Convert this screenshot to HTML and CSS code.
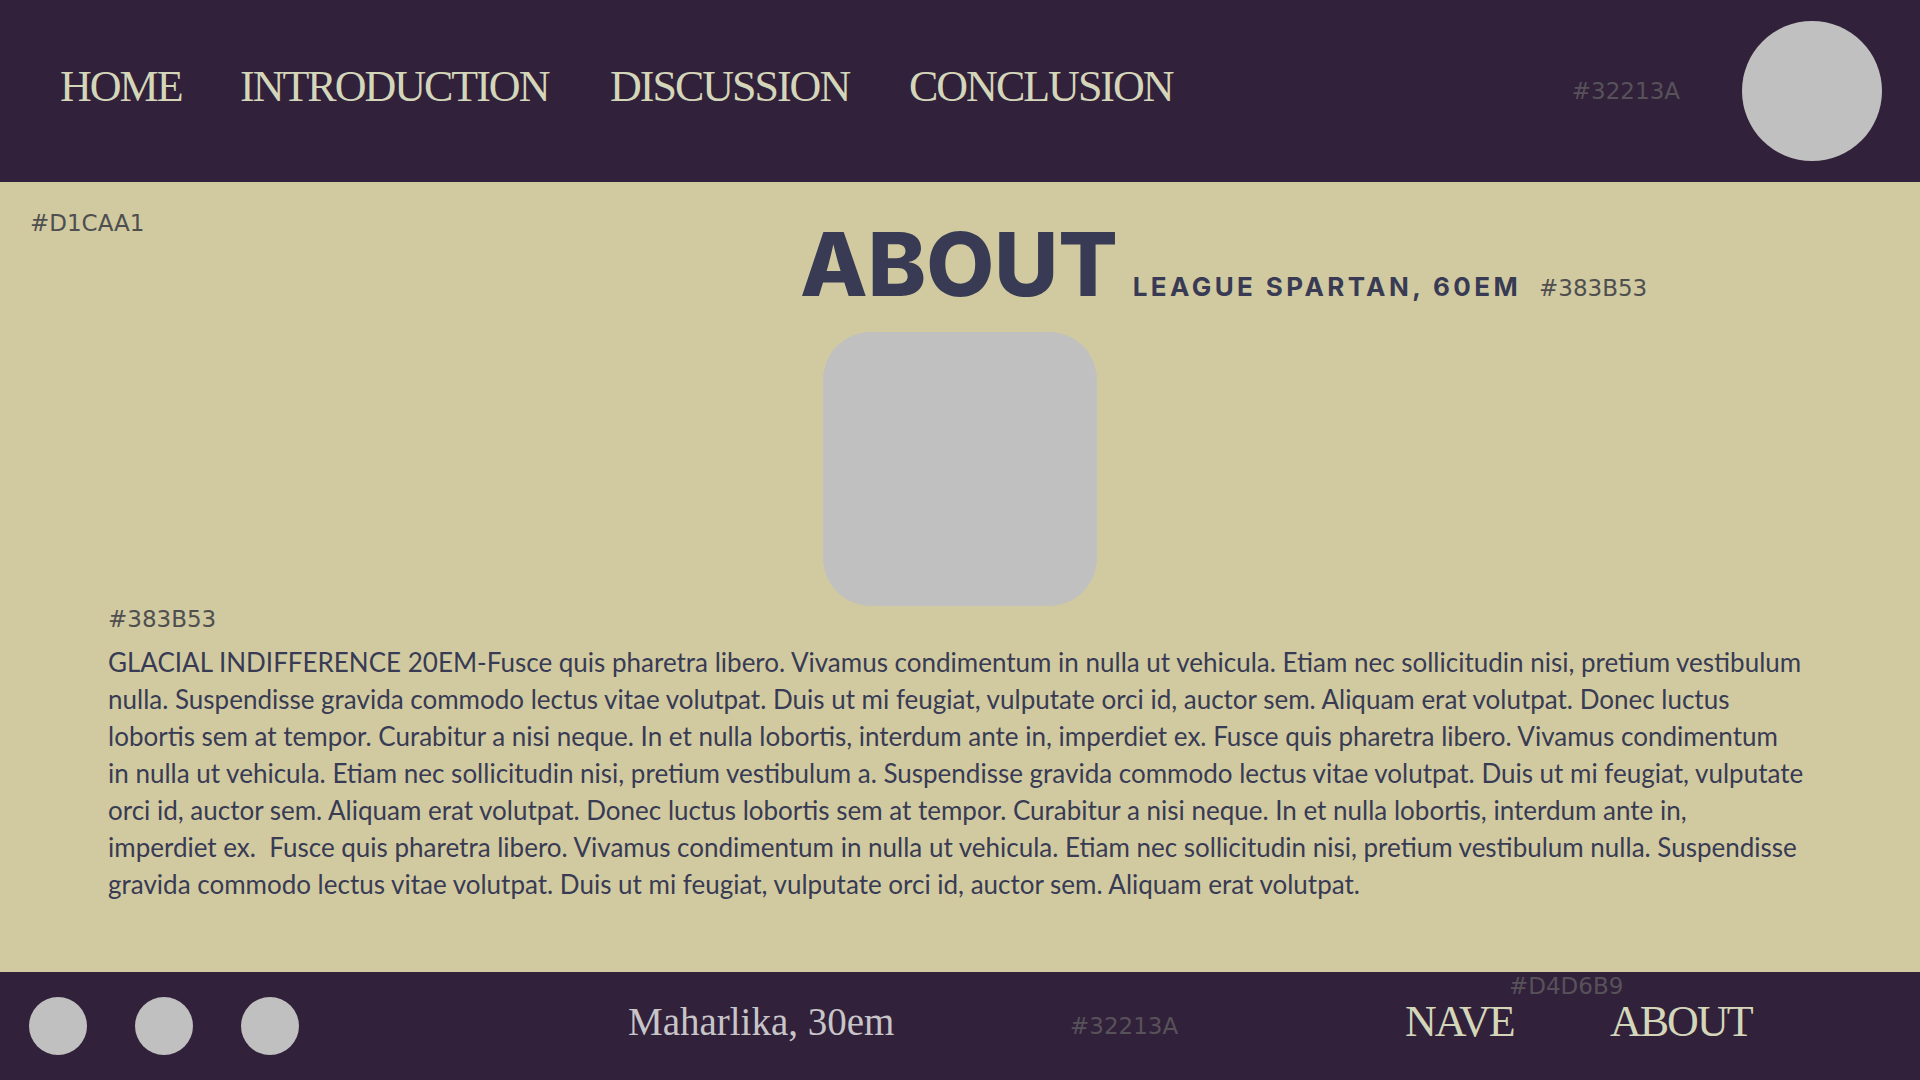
FILE: index.html
```html
<!DOCTYPE html>
<html lang="en">
<head>
<meta charset="utf-8">
<title>About</title>
<link rel="stylesheet" href="styles.css">
</head>
<body>
<header class="topbar">
  <nav class="nav">
    <a class="nav-link" href="#">HOME</a>
    <a class="nav-link" href="#">INTRODUCTION</a>
    <a class="nav-link" href="#">DISCUSSION</a>
    <a class="nav-link" href="#">CONCLUSION</a>
  </nav>
  <span class="hex hex-dark">#32213A</span>
  <div class="avatar"></div>
</header>

<main class="content">
  <div class="top-row">
    <span class="hex hex-light">#D1CAA1</span>
    <div class="title-group">
      <h1 class="title">ABOUT</h1>
      <span class="title-note">LEAGUE SPARTAN, 60EM</span>
      <span class="hex hex-light title-hex">#383B53</span>
    </div>
  </div>
  <div class="photo"></div>
  <div class="body-block">
    <span class="hex hex-light">#383B53</span>
    <p class="body-text">
      <span class="line">GLACIAL INDIFFERENCE 20EM-Fusce quis pharetra libero. Vivamus condimentum in nulla ut vehicula. Etiam nec sollicitudin nisi, pretium vestibulum</span>
      <span class="line">nulla. Suspendisse gravida commodo lectus vitae volutpat. Duis ut mi feugiat, vulputate orci id, auctor sem. Aliquam erat volutpat. Donec luctus</span>
      <span class="line">lobortis sem at tempor. Curabitur a nisi neque. In et nulla lobortis, interdum ante in, imperdiet ex. Fusce quis pharetra libero. Vivamus condimentum</span>
      <span class="line">in nulla ut vehicula. Etiam nec sollicitudin nisi, pretium vestibulum a. Suspendisse gravida commodo lectus vitae volutpat. Duis ut mi feugiat, vulputate</span>
      <span class="line">orci id, auctor sem. Aliquam erat volutpat. Donec luctus lobortis sem at tempor. Curabitur a nisi neque. In et nulla lobortis, interdum ante in,</span>
      <span class="line">imperdiet ex.&nbsp; Fusce quis pharetra libero. Vivamus condimentum in nulla ut vehicula. Etiam nec sollicitudin nisi, pretium vestibulum nulla. Suspendisse</span>
      <span class="line">gravida commodo lectus vitae volutpat. Duis ut mi feugiat, vulputate orci id, auctor sem. Aliquam erat volutpat.</span>
    </p>
  </div>
</main>

<footer class="footer">
  <div class="socials">
    <span class="dot"></span>
    <span class="dot"></span>
    <span class="dot"></span>
  </div>
  <span class="font-note">Maharlika, 30em</span>
  <span class="hex hex-dark">#32213A</span>
  <a class="foot-link" href="#">NAVE</a>
  <a class="foot-link" href="#">ABOUT</a>
  <span class="hex hex-dark footer-hex">#D4D6B9</span>
</footer>
</body>
</html>
```

FILE: styles.css
```css
* {
  box-sizing: border-box;
}

html, body {
  margin: 0;
  padding: 0;
}

body {
  width: 1920px;
  height: 1080px;
  overflow: hidden;
  display: flex;
  flex-direction: column;
  background: #D1CAA1;
  font-family: "Liberation Sans", Arial, sans-serif;
}

/* ---------- header ---------- */
.topbar {
  height: 182px;
  flex: none;
  background: #32213A;
  display: flex;
  align-items: center;
  padding-left: 60px;
  padding-right: 38px;
}

.nav {
  display: grid;
  grid-template-columns: 180px 370px 299px auto;
  margin-bottom: 10px;
}

.nav-link {
  font-family: "Liberation Serif", "Times New Roman", serif;
  font-size: 44px;
  letter-spacing: -2px;
  color: #D4D6B9;
  text-decoration: none;
  white-space: nowrap;
}

.hex {
  font-family: "DejaVu Sans", Verdana, sans-serif;
  font-size: 23px;
  white-space: nowrap;
}

.hex-dark {
  color: #57525a;
}

.hex-light {
  color: #4f4f4f;
}

.topbar .hex {
  margin-left: auto;
}

.avatar {
  width: 140px;
  height: 140px;
  border-radius: 50%;
  background: #C0C0C0;
  margin-left: 62px;
}

/* ---------- content ---------- */
.content {
  flex: 1;
  display: flex;
  flex-direction: column;
  padding-top: 28px;
}

.top-row {
  display: grid;
  grid-template-columns: 770px 1fr;
  padding-left: 30px;
  align-items: start;
}

.title-group {
  display: flex;
  align-items: baseline;
  margin-top: 10px;
}

.title {
  margin: 0;
  font-family: Inter, "Noto Sans", sans-serif;
  font-weight: 800;
  font-size: 88px;
  line-height: 88px;
  color: #383B53;
}

.title-note {
  margin-left: 15px;
  font-family: Inter, "Noto Sans", sans-serif;
  font-weight: 700;
  font-size: 26px;
  letter-spacing: 3.4px;
  color: #383B53;
}

.title-hex {
  margin-left: 18px;
}

.photo {
  width: 274px;
  height: 274px;
  margin: 24px auto 0;
  border-radius: 48px;
  background: #C0C0C0;
}

.body-block {
  padding-left: 108px;
  display: flex;
  flex-direction: column;
}

.body-text {
  margin: 12px 0 0;
  font-family: Lato, "Open Sans", sans-serif;
  font-size: 26px;
  line-height: 37px;
  color: #383B53;
}

.line {
  display: block;
  white-space: nowrap;
}

/* ---------- footer ---------- */
.footer {
  position: relative;
  height: 108px;
  flex: none;
  background: #32213A;
  display: grid;
  grid-template-columns: 599px 442px 335px 205px auto;
  align-items: center;
  padding-left: 29px;
}

.socials {
  display: flex;
  gap: 48px;
}

.dot {
  width: 58px;
  height: 58px;
  border-radius: 50%;
  background: #C0C0C0;
}

.font-note {
  font-family: "Liberation Serif", "Times New Roman", serif;
  font-size: 39px;
  color: #C8C5C9;
  margin-bottom: 10px;
  white-space: nowrap;
}

.foot-link {
  font-family: "Liberation Serif", "Times New Roman", serif;
  font-size: 44px;
  letter-spacing: -2px;
  color: #D4D6B9;
  text-decoration: none;
  margin-bottom: 10px;
}

.footer-hex {
  position: absolute;
  left: 1509px;
  top: 1px;
}
```
